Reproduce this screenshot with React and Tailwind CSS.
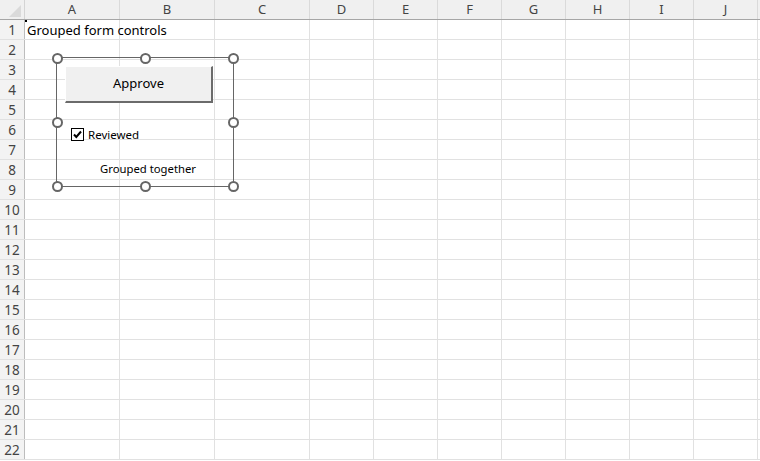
import React from "react";

const cols = [
  { name: "A", w: "w-[95px]" },
  { name: "B", w: "w-[95px]" },
  { name: "C", w: "w-[95px]" },
  { name: "D", w: "w-[64px]" },
  { name: "E", w: "w-[64px]" },
  { name: "F", w: "w-[64px]" },
  { name: "G", w: "w-[64px]" },
  { name: "H", w: "w-[64px]" },
  { name: "I", w: "w-[64px]" },
  { name: "J", w: "w-[64px]" },
];

const rows = Array.from({ length: 22 }, (_, i) => i + 1);

const Handle = ({ className }) => (
  <div
    className={`absolute w-[11px] h-[11px] -ml-[5.5px] -mt-[5.5px] rounded-full bg-white border-2 border-[#666666] ${className}`}
  />
);

const CheckBox = () => (
  <div className="w-[13px] h-[13px] border border-black bg-white flex items-center justify-center">
    <svg width="11" height="11" viewBox="0 0 11 11">
      <path d="M2 5.5 L4.3 8 L9 2.5" fill="none" stroke="#000" strokeWidth="2" />
    </svg>
  </div>
);

const App = () => {
  return (
    <div
      className="relative w-[760px] h-[461px] overflow-hidden bg-white text-[#222]"
      style={{ fontFamily: '"Noto Sans", "Open Sans", sans-serif' }}
    >
      {/* column header */}
      <div className="flex h-[20px] bg-[#f0f0f0] border-b border-[#a6a6a6]">
        <div className="w-[25px] h-full border-r border-[#d4d4d4] flex items-end justify-end pr-[3px] pb-[2px]">
          <svg width="12" height="12" viewBox="0 0 12 12">
            <path d="M12 0 L12 12 L0 12 Z" fill="#dadada" />
          </svg>
        </div>
        {cols.map((c) => (
          <div
            key={c.name}
            className={`${c.w} h-full border-r border-[#dadada] flex items-center justify-center text-[13px] text-[#444]`}
          >
            {c.name}
          </div>
        ))}
      </div>

      {/* rows */}
      {rows.map((r) => (
        <div key={r} className="flex h-[20px] border-b border-[#e1e1e1]">
          <div className="w-[25px] h-full bg-[#f3f3f3] border-r border-[#bdbdbd] flex items-center justify-center pt-[1px] text-[13.5px] text-[#444]">
            {r}
          </div>
          {cols.map((c, i) => (
            <div
              key={c.name}
              className={`${c.w} h-full border-r border-[#e1e1e1] flex items-center pt-[2px] text-[13px] text-black whitespace-nowrap ${i === 0 ? "pl-[2px]" : ""}`}
            >
              {r === 1 && i === 0 ? "Grouped form controls" : ""}
            </div>
          ))}
        </div>
      ))}

      {/* active cell mark */}
      <div className="absolute left-[25px] top-[20px] w-[2px] h-[2px] bg-black" />

      {/* grouped controls */}
      <div className="absolute left-[56px] top-[57px] w-[178px] h-[130px] border border-[#666666]">
        <div className="flex flex-col pt-[8px] pl-[8px]">
          <div className="w-[148px] h-[37px] bg-[#f0f0f0] border-t border-l border-t-white border-l-white border-r-2 border-b-2 border-r-[#6b6b6b] border-b-[#6b6b6b] flex items-center justify-center text-[13px] text-black">
            Approve
          </div>
          <div className="flex items-center gap-[4px] mt-[23px] pl-[6px] text-[11.5px] text-black">
            <CheckBox />
            <span>Reviewed</span>
          </div>
          <div className="mt-[18px] pl-[35px] text-[11.3px] text-black">Grouped together</div>
        </div>

        <Handle className="left-0 top-0" />
        <Handle className="left-1/2 top-0" />
        <Handle className="left-full top-0" />
        <Handle className="left-0 top-1/2" />
        <Handle className="left-full top-1/2" />
        <Handle className="left-0 top-full" />
        <Handle className="left-1/2 top-full" />
        <Handle className="left-full top-full" />
      </div>
    </div>
  );
};

export default App;
